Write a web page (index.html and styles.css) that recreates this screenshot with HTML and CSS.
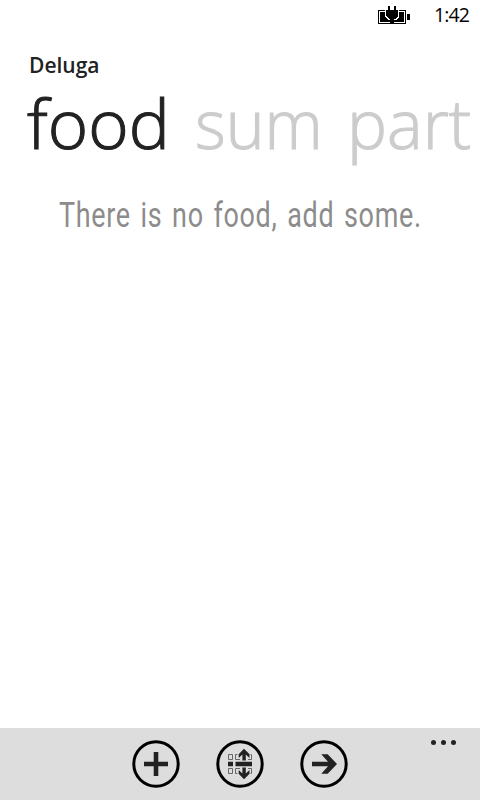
FILE: index.html
```html
<!DOCTYPE html>
<html lang="en">
<head>
<meta charset="utf-8">
<title>Deluga</title>
<link rel="stylesheet" href="styles.css">
</head>
<body>
<div class="phone">
  <header class="status">
    <svg class="battery" width="34" height="20" viewBox="0 0 34 20" shape-rendering="crispEdges">
      <path d="M1 5H29V19H1ZM2 6V18H28V6Z" fill="#000" fill-rule="evenodd"/>
      <path d="M3 7H27V17H3ZM30 9H33V15H30Z"/>
      <path d="M8 5H22V12L19 15H17V19H13V15H11L8 12Z" fill="#fff"/>
      <path d="M11 1H13V5H17V1H19V5H21V11L18 14H17V19H13V14H12L9 11V5H11Z"/>
    </svg>
    <span class="clock">1:42</span>
  </header>
  <h1 class="app-name">Deluga</h1>
  <nav class="pivot">
    <span class="tab food">food</span>
    <span class="tab sum">sum</span>
    <span class="tab part">part</span>
  </nav>
  <main class="content"><p class="empty">There is no food, add some.</p></main>
  <footer class="appbar">
    <svg class="action" viewBox="0 0 48 48">
      <circle cx="24" cy="24" r="22.2"/>
      <path d="M21.7 12H26.3V21.7H36V26.3H26.3V36H21.7V26.3H12V21.7H21.7Z"/>
    </svg>
    <svg class="action" viewBox="0 0 48 48">
      <circle cx="24" cy="24" r="22.2"/>
      <path class="outline" d="M12.5 14.5H16.5V19.5H12.5ZM12.5 28.5H16.5V33.5H12.5ZM19.5 14.5H35.5V19.5H19.5ZM19.5 28.5H35.5V33.5H19.5Z"/>
      <path class="halo" d="M21.5 13H34.5V18H32V21H24V18H21.5ZM21.5 35H34.5V30H32V27H24V30H21.5Z"/>
      <path d="M12 21.7H17V26.3H12ZM19.5 21.7H36V26.3H19.5ZM26.4 20.5V14.5L22.7 18V14.2L28 8.7L33.5 14.2V18L29.8 14.5V20.5ZM26.4 27.5V33.5L22.7 30V33.8L28 39.3L33.5 33.8V30L29.8 33.5V27.5Z"/>
    </svg>
    <svg class="action" viewBox="0 0 48 48">
      <circle cx="24" cy="24" r="22.2"/>
      <path d="M12 21.7H28L21.3 14.2H27.7L37 24L27.7 33.8H21.3L28 26.3H12Z"/>
    </svg>
    <div class="more"><i></i><i></i><i></i></div>
  </footer>
</div>
</body>
</html>
```
FILE: styles.css
```css
* { box-sizing: border-box; }
body { margin: 0; background: #fff; color: #222; font-family: "Open Sans", sans-serif; }
.phone { width: 480px; height: 800px; display: flex; flex-direction: column; overflow: hidden; }
.status { height: 32px; display: flex; justify-content: flex-end; padding: 5px 11px 0 0; color: #000; }
.battery { margin-right: 23px; }
.clock { width: 35px; font: 19.5px/20px "Open Sans", sans-serif; letter-spacing: -.9px; white-space: nowrap; }
.app-name { margin: 17px 0 0 29px; height: 34px; font: 600 21px/32px "Open Sans", sans-serif; white-space: nowrap; }
.pivot { height: 92px; display: flex; padding-left: 27px; }
.tab { font: 300 69px/79px "Open Sans", sans-serif; color: #ccc; white-space: nowrap; transform-origin: 0 50%; -webkit-text-stroke: 1.1px currentColor; }
.food { width: 168px; color: #222; }
.sum { width: 152px; transform: scaleX(.955); }
.part { width: 130px; transform: scaleX(.975); }
.content { flex: 1; padding: 17px 0 0 59px; }
.empty { margin: 0; width: 450px; font: 35px/48px Roboto, sans-serif; letter-spacing: .9px; word-spacing: 3px; color: #8c8c8c; white-space: nowrap; transform: scaleX(.77); transform-origin: 0 50%; }
.appbar { height: 72px; background: #ddd; display: flex; justify-content: center; gap: 36px; padding-top: 12px; position: relative; }
.action { width: 48px; height: 48px; fill: #222; }
.action circle { fill: none; stroke: #000; stroke-width: 3; }
.outline { fill: none; stroke: #666; stroke-width: 1; }
.action .halo { fill: #ddd; }
.more { position: absolute; right: 24px; top: 12px; display: flex; gap: 5px; }
.more i { width: 5px; height: 5px; border-radius: 50%; background: #222; }
```
